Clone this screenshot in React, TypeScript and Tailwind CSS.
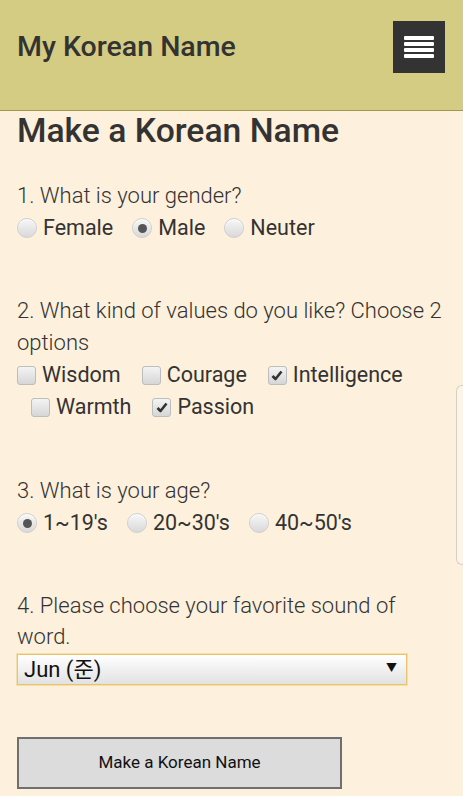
import { useState } from "react";

function Radio({ checked }: { checked: boolean }) {
  return (
    <span className="inline-flex items-center justify-center w-[20px] h-[20px] rounded-full border border-[#cfcfcf] bg-gradient-to-b from-[#f7f7f7] to-[#d9d9d9] shadow-[inset_0_1px_0_#fff]">
      {checked && <span className="w-[9px] h-[9px] rounded-full bg-[#555]" />}
    </span>
  );
}

function Check({ checked }: { checked: boolean }) {
  return (
    <span className="inline-flex items-center justify-center w-[19px] h-[19px] rounded-[3px] border border-[#bdbdbd] bg-gradient-to-b from-[#f4f4f4] to-[#d6d6d6]">
      {checked && (
        <svg width="12" height="11" viewBox="0 0 12 11">
          <path d="M1.5 6 L4.5 9 L10.5 1.5" fill="none" stroke="#333" strokeWidth="2.6" strokeLinejoin="round" />
        </svg>
      )}
    </span>
  );
}

export default function App() {
  const [gender, setGender] = useState("Male");
  const [age, setAge] = useState("1~19's");
  const [values, setValues] = useState<string[]>(["Intelligence", "Passion"]);

  const toggle = (v: string) =>
    setValues((prev) => (prev.includes(v) ? prev.filter((x) => x !== v) : [...prev, v]));

  const option = "flex items-center gap-[6px] cursor-pointer";

  return (
    <div className="relative min-h-[796px] bg-[#fdf0dc] text-[#333] font-['Roboto','Noto_Sans_CJK_KR',sans-serif]">
      <header className="h-[111px] bg-[#d4cc83] border-b border-[#9f9850] flex items-start justify-between pl-[17px] pr-[18px]">
        <h1 className="mt-[28px] text-[28.5px] leading-[38px] font-medium text-[#333]">My Korean Name</h1>
        <button className="mt-[21px] w-[52px] h-[52px] bg-[#333] flex flex-col items-center justify-center gap-[2px]">
          <span className="w-[30px] h-[4px] bg-white rounded-[1px]" />
          <span className="w-[30px] h-[4px] bg-white rounded-[1px]" />
          <span className="w-[30px] h-[4px] bg-white rounded-[1px]" />
          <span className="w-[30px] h-[4px] bg-white rounded-[1px]" />
        </button>
      </header>

      <main className="px-[17px]">
        <h2 className="text-[33.7px] leading-[40px] font-medium">Make a Korean Name</h2>

        <p className="mt-[29px] text-[22px] leading-[32px] font-light">1. What is your gender?</p>
        <div className="flex items-center gap-[19px] text-[21.5px] leading-[32px]">
          {["Female", "Male", "Neuter"].map((g) => (
            <label key={g} className={option} onClick={() => setGender(g)}>
              <Radio checked={gender === g} />
              <span>{g}</span>
            </label>
          ))}
        </div>

        <p className="mt-[51px] text-[22px] leading-[32px] font-light">
          2. What kind of values do you like? Choose 2 options
        </p>
        <div className="flex items-center gap-[21px] text-[21.5px] leading-[32px]">
          {["Wisdom", "Courage", "Intelligence"].map((v) => (
            <label key={v} className={option} onClick={() => toggle(v)}>
              <Check checked={values.includes(v)} />
              <span>{v}</span>
            </label>
          ))}
        </div>
        <div className="flex items-center gap-[21px] pl-[14px] text-[21.5px] leading-[32px]">
          {["Warmth", "Passion"].map((v) => (
            <label key={v} className={option} onClick={() => toggle(v)}>
              <Check checked={values.includes(v)} />
              <span>{v}</span>
            </label>
          ))}
        </div>

        <p className="mt-[52px] text-[22px] leading-[32px] font-light">3. What is your age?</p>
        <div className="flex items-center gap-[19px] text-[21.5px] leading-[32px]">
          {["1~19's", "20~30's", "40~50's"].map((a) => (
            <label key={a} className={option} onClick={() => setAge(a)}>
              <Radio checked={age === a} />
              <span>{a}</span>
            </label>
          ))}
        </div>

        <p className="mt-[51px] text-[22px] leading-[31px] font-light">
          4. Please choose your favorite sound of word.
        </p>
        <div className="mt-[2px] w-[390px] h-[31px] border border-[#e9c46d] shadow-[0_0_0_1px_#f5dfa8] bg-gradient-to-b from-[#ffffff] to-[#e2e2e2] flex items-center justify-between pl-[6px] pr-[9px]">
          <span className="text-[22px] leading-[28px] text-[#111]">Jun (준)</span>
          <span className="text-[11px] text-[#111]">▼</span>
        </div>

        <button className="mt-[52px] w-[325px] h-[52px] bg-[#dcdcdc] border-2 border-[#6f6f6f] text-[17px] text-[#111]">
          Make a Korean Name
        </button>
      </main>

      <div className="absolute right-0 top-[385px] w-[7px] h-[180px] rounded-l-[6px] border border-r-0 border-[#d5d0c4] bg-[#fdf4e6]" />
    </div>
  );
}
